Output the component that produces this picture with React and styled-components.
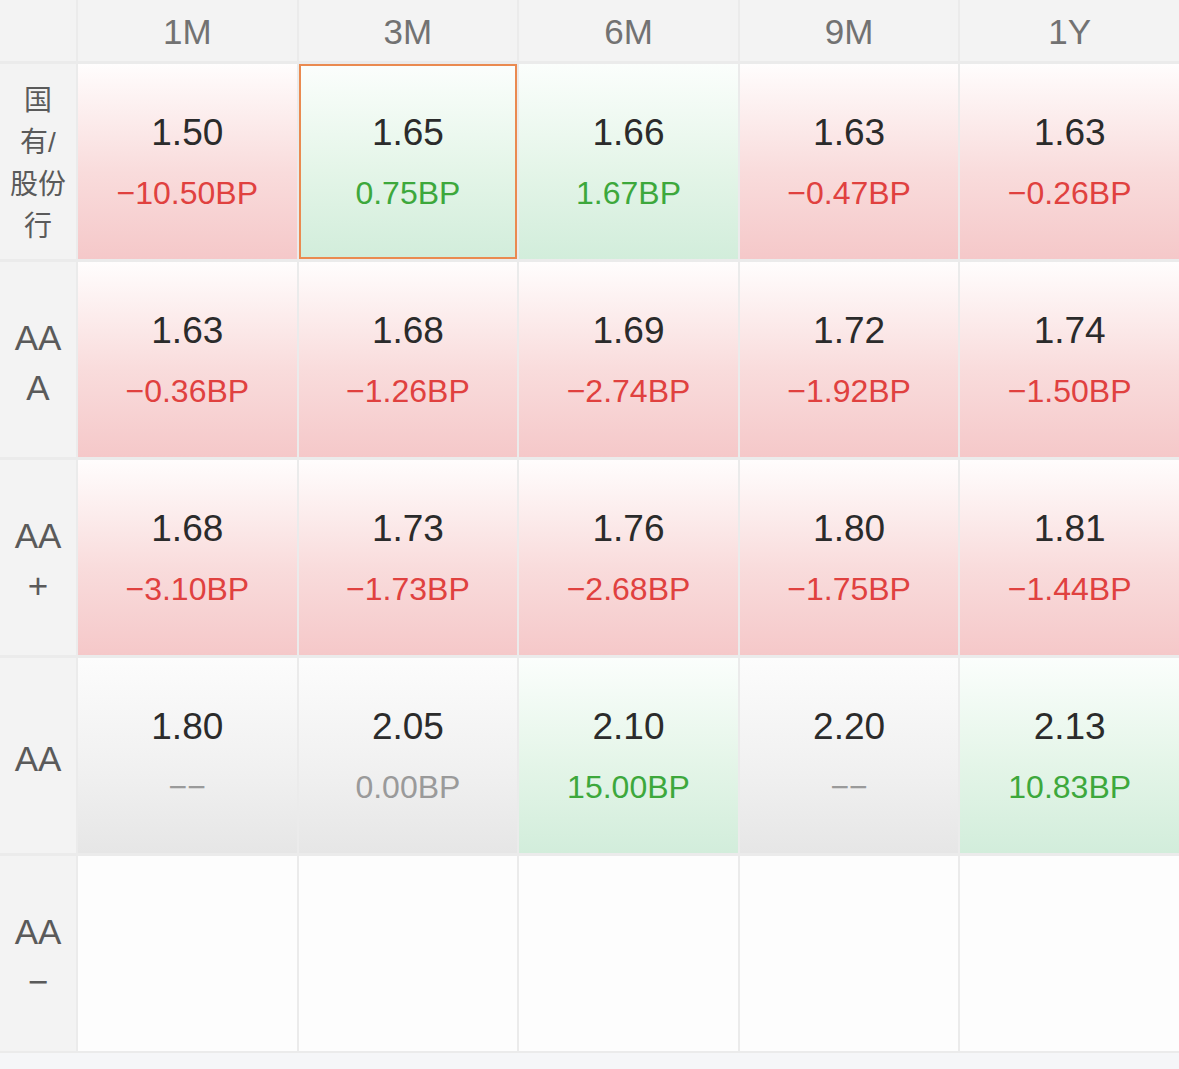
import React from 'react';
import styled, { createGlobalStyle } from 'styled-components';

const GlobalStyle = createGlobalStyle`
  html, body {
    margin: 0;
    padding: 0;
    background: #f5f6f8;
    font-family: "Liberation Sans", "Noto Sans CJK SC", sans-serif;
  }
`;

const Page = styled.div`
  width: 1179px;
  height: 1069px;
  background: #f5f6f8;
  overflow: hidden;
`;

const Grid = styled.div`
  display: grid;
  grid-template-columns: 76px repeat(5, 1fr);
  grid-template-rows: 61px repeat(5, 195px);
  column-gap: 2px;
  row-gap: 3px;
  background: #ebebeb;
  padding-bottom: 2px;
`;

const Corner = styled.div`
  background: #f3f3f3;
`;

const HeadCell = styled.div`
  background: #f3f3f3;
  display: flex;
  align-items: center;
  justify-content: center;
  padding-top: 3px;
  font-size: 35px;
  font-weight: 300;
  color: #727272;
`;

const RowLabel = styled.div`
  background: #f3f3f3;
  display: flex;
  flex-direction: column;
  align-items: center;
  justify-content: center;
  padding-top: ${p => (p.cjk ? '4px' : '6px')};
  color: #5a5a5a;
  font-size: ${p => (p.cjk ? '28px' : '35px')};
  line-height: ${p => (p.cjk ? '42px' : '50px')};
`;

const gradients = {
  down: 'linear-gradient(180deg, #fffdfd 0%, #f9dcdc 55%, #f5c8c9 100%)',
  up: 'linear-gradient(180deg, #fbfefc 0%, #e4f5e8 55%, #d2eddb 100%)',
  flat: 'linear-gradient(180deg, #fcfcfc 0%, #f1f1f1 55%, #e6e6e6 100%)',
  empty: '#fdfdfd',
};

const Cell = styled.div`
  box-sizing: border-box;
  background: ${p => gradients[p.tone]};
  border: ${p => (p.selected ? '2px solid #ea8a50' : 'none')};
  display: flex;
  flex-direction: column;
  align-items: center;
  justify-content: center;
  gap: 18px;
`;

const Value = styled.div`
  font-size: 37px;
  font-weight: 500;
  color: #2b2b2b;
  line-height: 44px;
`;

const changeColors = { down: '#e0413f', up: '#3da83c', flat: '#9a9a9a' };

const Change = styled.div`
  font-size: 32px;
  color: ${p => changeColors[p.tone]};
  line-height: 40px;
`;

const terms = ['1M', '3M', '6M', '9M', '1Y'];

const rows = [
  {
    label: ['国', '有/', '股份', '行'],
    cjk: true,
    cells: [
      ['1.50', '−10.50BP', 'down'],
      ['1.65', '0.75BP', 'up', true],
      ['1.66', '1.67BP', 'up'],
      ['1.63', '−0.47BP', 'down'],
      ['1.63', '−0.26BP', 'down'],
    ],
  },
  {
    label: ['AA', 'A'],
    cells: [
      ['1.63', '−0.36BP', 'down'],
      ['1.68', '−1.26BP', 'down'],
      ['1.69', '−2.74BP', 'down'],
      ['1.72', '−1.92BP', 'down'],
      ['1.74', '−1.50BP', 'down'],
    ],
  },
  {
    label: ['AA', '+'],
    cells: [
      ['1.68', '−3.10BP', 'down'],
      ['1.73', '−1.73BP', 'down'],
      ['1.76', '−2.68BP', 'down'],
      ['1.80', '−1.75BP', 'down'],
      ['1.81', '−1.44BP', 'down'],
    ],
  },
  {
    label: ['AA'],
    cells: [
      ['1.80', '−−', 'flat'],
      ['2.05', '0.00BP', 'flat'],
      ['2.10', '15.00BP', 'up'],
      ['2.20', '−−', 'flat'],
      ['2.13', '10.83BP', 'up'],
    ],
  },
  {
    label: ['AA', '−'],
    cells: [null, null, null, null, null],
  },
];

export default function App() {
  return (
    <Page>
      <GlobalStyle />
      <Grid>
        <Corner />
        {terms.map(t => (
          <HeadCell key={t}>{t}</HeadCell>
        ))}
        {rows.map((row, ri) => (
          <React.Fragment key={ri}>
            <RowLabel cjk={row.cjk}>
              {row.label.map((l, i) => (
                <span key={i}>{l}</span>
              ))}
            </RowLabel>
            {row.cells.map((c, ci) =>
              c ? (
                <Cell key={ci} tone={c[2]} selected={c[3]}>
                  <Value>{c[0]}</Value>
                  <Change tone={c[2]}>{c[1]}</Change>
                </Cell>
              ) : (
                <Cell key={ci} tone="empty" />
              )
            )}
          </React.Fragment>
        ))}
      </Grid>
    </Page>
  );
}
